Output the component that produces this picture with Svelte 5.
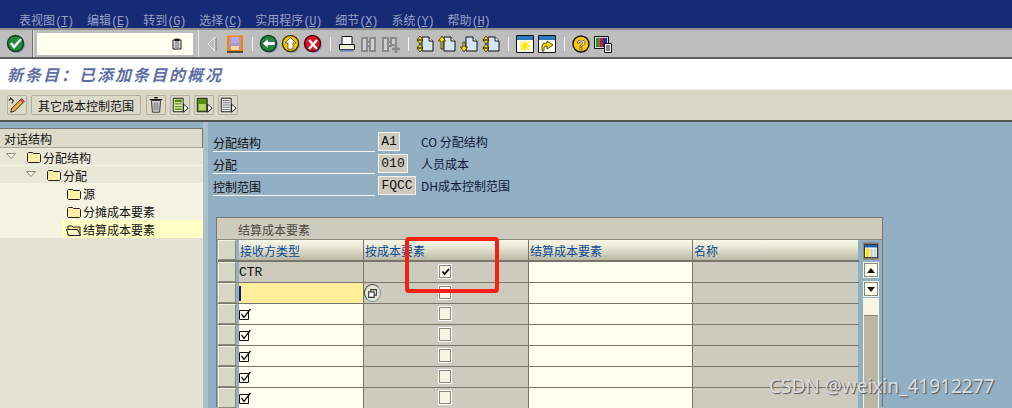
<script>
	const menus = [
		['表视图', 'T'], ['编辑', 'E'], ['转到', 'G'], ['选择', 'C'],
		['实用程序', 'U'], ['细节', 'X'], ['系统', 'Y'], ['帮助', 'H']
	];
	const fields = [
		{ label: '分配结构', value: 'A1', width: 22, text: 'CO 分配结构' },
		{ label: '分配', value: '010', width: 30, text: '人员成本' },
		{ label: '控制范围', value: 'FQCC', width: 38, text: 'DH成本控制范围' }
	];
	const tree = [
		{ text: '分配结构', level: 0, open: true },
		{ text: '分配', level: 1, open: true },
		{ text: '源', level: 2 },
		{ text: '分摊成本要素', level: 2 },
		{ text: '结算成本要素', level: 2, selected: true }
	];
	const rows = [
		{ kind: 'readonly', type: 'CTR', checked: true },
		{ kind: 'active' },
		{ kind: 'entry' },
		{ kind: 'entry' },
		{ kind: 'entry' },
		{ kind: 'entry' },
		{ kind: 'entry' },
		{ kind: 'entry' }
	];
</script>

{#snippet roundIcon(fill, dark)}
	<circle cx="11" cy="11" r="8" fill="#8a9ac8" />
	<circle cx="9.5" cy="9.5" r="8" fill={fill} stroke={dark} stroke-width="1.4" />
{/snippet}

{#snippet okIcon()}
	<svg viewBox="0 0 20 20">
		{@render roundIcon('#1f8a3c', '#10401f')}
		<path d="M5 9l3 4 7-8" fill="none" stroke="#fff" stroke-width="2.4" />
	</svg>
{/snippet}
{#snippet historyIcon()}
	<svg viewBox="0 0 12 12" class="small">
		<path d="M2 2h8v9H2z" fill="#fff" stroke="#111" />
		<path d="M4 1h4v2H4zM3.500 5h5M3.500 7h5M3.500 9h5" fill="#111" stroke="#111" stroke-width=".8" />
	</svg>
{/snippet}
{#snippet leftIcon()}
	<svg viewBox="0 0 20 20">
		<path d="M12 3v14L5 10z" fill="#bdbdbd" stroke="#f4f4f4" />
		<path d="M13 4v13" stroke="#777" />
	</svg>
{/snippet}
{#snippet saveIcon()}
	<svg viewBox="0 0 20 20">
		<path d="M3 2.500h14v14H3z" fill="#a898cc" stroke="#f08800" stroke-width="2" />
		<path d="M6 3h8v6H6z" fill="#b8a8d8" />
		<path d="M6 12h8v4H6z" fill="#fbd898" />
		<path d="M2 18h16" stroke="#222" stroke-width="1.400" />
	</svg>
{/snippet}
{#snippet backIcon()}
	<svg viewBox="0 0 20 20">
		{@render roundIcon('#1f8a3c', '#10401f')}
		<path d="M3.500 9.500L9 4.500v3h7v4H9v3z" fill="#fff" stroke="#123" stroke-width=".5" />
	</svg>
{/snippet}
{#snippet upIcon()}
	<svg viewBox="0 0 20 20">
		{@render roundIcon('#f5c800', '#4a3b00')}
		<path d="M9.500 3.500L15 9h-3v6H7V9H4z" fill="#fff" stroke="#222" stroke-width=".6" />
	</svg>
{/snippet}
{#snippet cancelIcon()}
	<svg viewBox="0 0 20 20">
		{@render roundIcon('#d81020', '#500010')}
		<path d="M6 6l8 9M14 6l-8 9" stroke="#fff" stroke-width="2.400" />
	</svg>
{/snippet}
{#snippet printIcon()}
	<svg viewBox="0 0 20 20">
		<path d="M5 2.500h10v8H5z" fill="#fff" stroke="#111" />
		<path d="M2.500 10.500h15v5h-15z" fill="#f0efd8" stroke="#111" />
		<path d="M3 16.500h14" stroke="#6b7db0" stroke-width="2" />
	</svg>
{/snippet}
{#snippet findIcon()}
	<svg viewBox="0 0 20 20">
		<path d="M3 4h5v13H3zM11 4h5v13h-5zM8 8h3v4H8z" fill="#cfcfcf" stroke="#8a8a8a" stroke-width="2" />
	</svg>
{/snippet}
{#snippet findNextIcon()}
	<svg viewBox="0 0 20 20">
		<path d="M2 4h5v13H2zM10 4h5v7h-5zM7 8h3v4H7z" fill="#cfcfcf" stroke="#8a8a8a" stroke-width="2" />
		<path d="M11 15h8M15 11v8" stroke="#8a8a8a" stroke-width="2.400" />
	</svg>
{/snippet}
{#snippet pageShape()}
	<path d="M7 3h7l4 4v10H7z" fill="#d6e6f7" stroke="#111" />
	<path d="M14 3v4h4" fill="#fff" stroke="#111" />
{/snippet}
{#snippet firstIcon()}
	<svg viewBox="0 0 20 20">
		{@render pageShape()}
		<path d="M5 2L2 6h6zM2 6l3 4 3-4z" fill="#ffe000" stroke="#111" stroke-width=".7" />
		<path d="M2 14h6l-3 4zM2 14l3-4 3 4z" fill="#ffe000" stroke="#111" stroke-width=".7" />
	</svg>
{/snippet}
{#snippet prevIcon()}
	<svg viewBox="0 0 20 20">
		{@render pageShape()}
		<path d="M5 2L1.500 7H4v8h2V7h2.500z" fill="#ffe000" stroke="#111" stroke-width=".7" />
	</svg>
{/snippet}
{#snippet nextIcon()}
	<svg viewBox="0 0 20 20">
		{@render pageShape()}
		<path d="M5 18L1.500 13H4V8h2v5h2.500z" fill="#ffe000" stroke="#111" stroke-width=".7" />
	</svg>
{/snippet}
{#snippet lastIcon()}
	<svg viewBox="0 0 20 20">
		{@render pageShape()}
		<path d="M5 2L2 6h6zM2 6l3 4 3-4z" fill="#ffe000" stroke="#111" stroke-width=".7" />
		<path d="M2 14h6l-3 4zM2 14l3-4 3 4z" fill="#ffe000" stroke="#111" stroke-width=".7" />
	</svg>
{/snippet}
{#snippet sessionIcon()}
	<svg viewBox="0 0 20 20">
		<path d="M1.500 1.500h17v17h-17z" fill="#fffff0" stroke="#111" />
		<path d="M2 2h16v4H2z" fill="#2f76c0" />
		<path d="M10 7v10M5 12h10M6 8l8 8M14 8l-8 8" stroke="#ffe800" stroke-width="1.600" />
	</svg>
{/snippet}
{#snippet shortcutIcon()}
	<svg viewBox="0 0 20 20">
		<path d="M1.500 1.500h17v17h-17z" fill="#fffff0" stroke="#111" />
		<path d="M2 2h16v4H2z" fill="#2f76c0" />
		<path d="M5 17v-5q0-3 4-3h1V7l6 4-6 4v-3H9q-2 0-2 2v3z" fill="#ffd800" stroke="#111" stroke-width=".7" />
	</svg>
{/snippet}
{#snippet helpIcon()}
	<svg viewBox="0 0 20 20">
		<circle cx="10" cy="10" r="8" fill="#ffc800" stroke="#111" stroke-width="1.400" />
		<text x="10" y="15.500" class="qmark">?</text>
	</svg>
{/snippet}
{#snippet layoutIcon()}
	<svg viewBox="0 0 20 20">
		<path d="M1.500 2.500h14v12h-14z" fill="#d8d8d8" stroke="#111" />
		<path d="M3 4h3.500v9H3z" fill="#10a030" />
		<path d="M6.500 4H10v9H6.500z" fill="#e01010" />
		<path d="M10 4h4v9h-4z" fill="#1030d0" />
		<path d="M11.500 9.500h7v9h-7z" fill="#fff" stroke="#111" />
		<path d="M13 12h4M13 14h4M13 16h4" stroke="#111" />
	</svg>
{/snippet}
{#snippet editIcon()}
	<svg viewBox="0 0 20 20">
		<path d="M1 5q2-3 4-1t-1 4M2 2l4 3" fill="none" stroke="#222" stroke-width="1.200" />
		<path d="M15 3l3 3L7 17l-4 1 1-4z" fill="#f3a93c" stroke="#222" />
		<path d="M14 4l3 3" stroke="#e04040" stroke-width="2" />
	</svg>
{/snippet}
{#snippet trashIcon()}
	<svg viewBox="0 0 20 20">
		<path d="M5 5h10l-1 13H6z" fill="#d8d8d8" stroke="#222" />
		<path d="M3 4h14M8 2h4" stroke="#222" stroke-width="1.600" />
		<path d="M8 7v9M10 7v9M12 7v9" stroke="#666" />
	</svg>
{/snippet}
{#snippet listGreenIcon()}
	<svg viewBox="0 0 20 20">
		<path d="M2.500 2.500h11v15h-11z" fill="#eef2c8" stroke="#111" />
		<path d="M4 4h8v3H4zM4 8h8v1.500H4zM4 11h8v1.500H4zM4 14h8v1.500H4z" fill="#5a8c10" />
		<path d="M14 9l5 4.500-5 4.500z" fill="#fff" stroke="#111" />
	</svg>
{/snippet}
{#snippet listDarkIcon()}
	<svg viewBox="0 0 20 20">
		<path d="M2.500 2.500h11v15h-11z" fill="#5a8c10" stroke="#111" />
		<path d="M4 9h8v7H4z" fill="#bcd070" />
		<path d="M14 9l5 4.500-5 4.500z" fill="#fff" stroke="#111" />
	</svg>
{/snippet}
{#snippet listWhiteIcon()}
	<svg viewBox="0 0 20 20">
		<path d="M2.500 2.500h11v15h-11z" fill="#f2f2f2" stroke="#111" />
		<path d="M4 5h8M4 7.500h8M4 10h8M4 12.500h8M4 15h8" stroke="#666" />
		<path d="M14 9l5 4.500-5 4.500z" fill="#fff" stroke="#111" />
	</svg>
{/snippet}
{#snippet tickIcon()}
	<svg viewBox="0 0 13 13" class="tick">
		<path d="M.5 2.500h9v9h-9z" fill="#fffff0" stroke="#111" />
		<path d="M2.500 6l2.500 3.500L11.500 1" fill="none" stroke="#111" stroke-width="1.300" />
	</svg>
{/snippet}
{#snippet folderIcon(open)}
	<svg viewBox="0 0 16 14" class="folder">
		{#if open}
			<path d="M2 3h4l1 1h7v8H2z" fill="#ffe79a" stroke="#222" />
			<path d="M.5 6.500h11l3 6H2.500z" fill="#fff6c8" stroke="#222" />
		{:else}
			<path d="M1.500 3.500l1-1h4l1 1h6l1 1v7l-1 1h-11l-1-1z" fill="#ffeea8" stroke="#222" />
		{/if}
	</svg>
{/snippet}

{#snippet tools(items)}
	{#each items as item}
		{#if item === null}
			<span class="sep"></span>
		{:else}
			<span class="tool">{@render item()}</span>
		{/if}
	{/each}
{/snippet}

<div class="window">
	<div class="menubar">
		{#each menus as [name, key]}
			<span class="menu">{name}<span class="paren">(<u>{key}</u>)</span></span>
		{/each}
	</div>

	<div class="systembar">
		<span class="tool first">{@render okIcon()}</span>
		<span class="groove"></span>
		<div class="command">{@render historyIcon()}</div>
		<span class="groove second"></span>
		{@render tools([leftIcon, saveIcon, null, backIcon, upIcon, cancelIcon, null, printIcon, findIcon, findNextIcon, null, firstIcon, prevIcon, nextIcon, lastIcon, null, sessionIcon, shortcutIcon, null, helpIcon, layoutIcon])}
	</div>

	<div class="titlebar">新条目：已添加条目的概况</div>

	<div class="appbar">
		<span class="btn icon">{@render editIcon()}</span>
		<span class="btn text">其它成本控制范围</span>
		<span class="btn icon">{@render trashIcon()}</span>
		<span class="btn icon">{@render listGreenIcon()}</span>
		<span class="btn icon">{@render listDarkIcon()}</span>
		<span class="btn icon">{@render listWhiteIcon()}</span>
	</div>

	<div class="content">
		<aside class="nav">
			<div class="navhead">对话结构</div>
			{#each tree as node}
				<div class="node level{node.level}" class:selected={node.selected}>
					{#if node.open}
						<svg viewBox="0 0 10 6" class="tri"><path d="M.5 .5h9L5 5.500z" fill="#f5f4e2" stroke="#8a8a7c" /></svg>
					{/if}
					{@render folderIcon(node.selected)}
					<span>{node.text}</span>
				</div>
			{/each}
			<div class="navrest"></div>
		</aside>

		<div class="splitter"></div>

		<main class="detail">
			<div class="form">
				{#each fields as f}
					<div class="field">
						<span class="label">{f.label}</span>
						<span class="value" style="width: {f.width}px">{f.value}</span>
						<span class="desc">{f.text}</span>
					</div>
				{/each}
			</div>

			<section class="panel">
				<div class="caption">结算成本要素</div>
				<div class="grid">
					<div class="table">
						<div class="row head">
							<span class="selector"></span>
							<span class="cell c1">接收方类型</span>
							<span class="cell c2">按成本要素</span>
							<span class="cell c3">结算成本要素</span>
							<span class="cell c4">名称</span>
						</div>
						{#each rows as row}
							<div class="row">
								<span class="selector"></span>
								<span class="cell c1 {row.kind}">
									{#if row.kind === 'readonly'}{row.type}{/if}
									{#if row.kind === 'active'}<span class="caret"></span>{/if}
									{#if row.kind === 'entry'}{@render tickIcon()}{/if}
								</span>
								<span class="cell c2 ro">
									{#if row.kind === 'active'}
										<span class="f4">
											<svg viewBox="0 0 10 10">
												<path d="M3.500 1.500h5v5h-5z" fill="#fff" stroke="#333" />
												<path d="M1.500 3.500h5v5h-5z" fill="#fff" stroke="#333" />
											</svg>
										</span>
									{/if}
									<span class="check">
										{#if row.checked}
											<svg viewBox="0 0 10 10"><path d="M1.500 5l2.500 3 5-6" fill="none" stroke="#111" stroke-width="2" /></svg>
										{/if}
									</span>
								</span>
								<span class="cell c3 edit"></span>
								<span class="cell c4 ro"></span>
							</div>
						{/each}
					</div>
					<div class="scroll">
						<span class="config">
							<svg viewBox="0 0 16 16">
								<path d="M.5 .5h15v15H.5z" fill="#fff" stroke="#111" />
								<path d="M1 1h14v3H1z" fill="#1f5fae" />
								<path d="M2 5h4v10H2z" fill="#ffe000" />
								<path d="M7 5h3v10H7zM11 5h3v10h-3z" fill="#c8d0d8" />
							</svg>
						</span>
						<span class="arrow"><i class="up"></i></span>
						<span class="arrow down-btn"><i class="down"></i></span>
						<span class="track"><span class="thumb"></span></span>
					</div>
				</div>
			</section>
		</main>
	</div>

	<div class="callout"></div>
	<div class="watermark">CSDN @weixin_41912277</div>
</div>

<style>
	:global(body) {
		background: #93afc3;
	}

	.window {
		position: relative;
		width: 1012px;
		height: 408px;
		overflow: hidden;
		display: flex;
		flex-direction: column;
		font-family: "Noto Sans CJK SC", "Liberation Sans", sans-serif;
		font-size: 12px;
		color: #111;
		background: #93afc3;
	}

	.menubar {
		height: 28px;
		box-sizing: border-box;
		flex: none;
		display: flex;
		gap: 14px;
		padding: 12px 0 0 19px;
		background: #172a75;
		color: #98a0c4;
		line-height: 16px;
	}

	.paren {
		font-family: "Liberation Mono", monospace;
		font-size: 12px;
		letter-spacing: -1.2px;
	}

	.systembar {
		height: 31px;
		box-sizing: border-box;
		flex: none;
		display: flex;
		align-items: center;
		background: #bdbdbd;
		border-top: 2px solid #8c8c8c;
		border-bottom: 2px solid #5c5c5c;
	}

	.tool {
		width: 22px;
		height: 22px;
		display: flex;
		align-items: center;
		justify-content: center;
	}

	.tool svg {
		width: 20px;
		height: 20px;
	}

	.tool.first {
		margin-left: 5px;
		margin-right: 5px;
	}

	.groove {
		width: 1px;
		align-self: stretch;
		background: #6f6f6f;
		border-right: 1px solid #e8e8e8;
	}

	.groove.second {
		margin: 0 3px 0 5px;
		background: #e8e8e8;
		border: 0;
	}

	.sep {
		width: 12px;
		display: flex;
		justify-content: center;
		height: 14px;
	}

	.sep::before {
		content: "";
		width: 1px;
		background: #f2f2f2;
	}

	.command {
		width: 156px;
		height: 22px;
		margin-left: 3px;
		box-sizing: border-box;
		padding-right: 10px;
		display: flex;
		align-items: center;
		justify-content: flex-end;
		background: #fffff0;
	}

	.small {
		width: 12px;
		height: 12px;
	}

	.titlebar {
		height: 30px;
		box-sizing: border-box;
		flex: none;
		padding: 2px 0 0 7px;
		background: #fff;
		color: #5e6ea6;
		font-size: 16px;
		font-weight: 700;
		font-style: italic;
		letter-spacing: 2px;
		line-height: 26px;
		white-space: nowrap;
	}

	.appbar {
		height: 33px;
		box-sizing: border-box;
		flex: none;
		display: flex;
		align-items: center;
		gap: 4px;
		padding-left: 7px;
		background: #d8d7c5;
		border-top: 1px solid #f4f3e6;
		border-bottom: 2px solid #55554d;
	}

	.btn {
		height: 20px;
		box-sizing: border-box;
		display: flex;
		align-items: center;
		justify-content: center;
		border: 1px solid #b0af9e;
		border-radius: 2px;
		background: #dcdbca;
	}

	.btn.icon {
		width: 20px;
	}

	.btn.icon svg {
		width: 18px;
		height: 18px;
	}

	.btn.text {
		width: 110px;
		font-size: 12px;
	}

	.btn.text + .btn.icon {
		margin-left: 1px;
	}

	.content {
		flex: 1;
		min-height: 0;
		display: flex;
	}

	.nav {
		width: 203px;
		margin-top: 6px;
		flex: none;
		display: flex;
		flex-direction: column;
		background: #f5f4e2;
		border-top: 1px solid #77766a;
	}

	.navhead {
		height: 19px;
		box-sizing: border-box;
		padding-left: 4px;
		background: #dcdbca;
		border-right: 1px solid #77766a;
		border-bottom: 1px solid #a8a798;
		line-height: 19px;
	}

	.node {
		position: relative;
		height: 18px;
		box-sizing: border-box;
		padding-top: 1px;
		display: flex;
		align-items: center;
		line-height: 17px;
		white-space: nowrap;
	}

	.node.level0,
	.node.level1 {
		background: #e9e8d6;
		border-bottom: 1px solid #f5f4e2;
	}

	.level0 {
		padding-left: 26px;
	}

	.level1 {
		padding-left: 46px;
	}

	.level2 {
		padding-left: 66px;
	}

	.node.selected {
		margin-left: 62px;
		padding-left: 4px;
		background: #ffffc4;
	}

	.tri {
		position: absolute;
		margin-left: -20px;
		margin-top: -3px;
		width: 10px;
		height: 6px;
	}

	.folder {
		width: 16px;
		height: 14px;
		margin-right: 1px;
		flex: none;
	}

	.navrest {
		flex: 1;
		background: #e4e3d1;
	}

	.splitter {
		width: 5px;
		flex: none;
		background: #aebfca;
	}

	.detail {
		flex: 1;
		min-width: 0;
	}

	.form {
		padding: 10px 0 0 5px;
	}

	.field {
		display: flex;
		height: 22px;
		align-items: flex-start;
	}

	.label {
		width: 162px;
		margin-right: 3px;
		height: 18px;
		padding-top: 1px;
		line-height: 19px;
		border-bottom: 1px solid #f4f6f4;
	}

	.value {
		height: 19px;
		box-sizing: border-box;
		text-align: center;
		font-family: "Liberation Mono", monospace;
		font-size: 13px;
		line-height: 17px;
		background: #cdcbbd;
		border: 1px solid #f2f3ea;
	}

	.desc {
		margin-left: 5px;
		line-height: 20px;
		color: #10183a;
	}

	.field:nth-child(1) .desc {
		margin-left: 21px;
	}

	.field:nth-child(2) .desc {
		margin-left: 13px;
	}

	.panel {
		margin: 19px 0 0 8px;
		width: 667px;
		height: 190px;
		box-sizing: border-box;
		border: 1px solid #77766a;
		border-bottom: 0;
		background: #93afc3;
	}

	.caption {
		height: 22px;
		box-sizing: border-box;
		padding: 3px 0 0 21px;
		line-height: 17px;
		color: #4a4a40;
		background: #cdcbbd;
		border-bottom: 1px solid #8a897c;
	}

	.grid {
		display: flex;
	}

	.table {
		width: 641px;
		margin-left: 1px;
		flex: none;
	}

	.row {
		display: flex;
		height: 21px;
		box-sizing: border-box;
		border-bottom: 1px solid #77766a;
	}

	.row.head {
		height: 22px;
		border-bottom: 2px solid #77766a;
	}

	.selector {
		width: 18px;
		flex: none;
		box-sizing: border-box;
		margin-right: 3px;
		background: #d8d7c5;
		border: 1px solid #f2f1e4;
		border-right-color: #8a897c;
		border-bottom-color: #8a897c;
	}

	.cell {
		position: relative;
		box-sizing: border-box;
		display: flex;
		align-items: center;
		border-right: 1px solid #77766a;
		overflow: hidden;
	}

	.c1 {
		width: 125px;
	}

	.c2 {
		width: 165px;
	}

	.c3 {
		width: 164px;
	}

	.c4 {
		width: 165px;
		border-right: 0;
	}

	.head .cell {
		padding-left: 1px;
		color: #0b4a92;
		background: linear-gradient(#f8f7e8, #e6e5d2 40%, #bab9a7);
	}

	.readonly,
	.ro {
		background: #cdcbbd;
	}

	.readonly {
		font-family: "Liberation Mono", monospace;
		font-size: 13px;
	}

	.active {
		background: #ffee9a;
	}

	.entry,
	.edit {
		background: #fffff0;
	}

	.caret {
		width: 2px;
		height: 15px;
		background: #0a1a70;
	}

	.tick {
		width: 13px;
		height: 13px;
	}

	.check {
		position: absolute;
		left: 74px;
		top: 2px;
		width: 14px;
		height: 15px;
		box-sizing: border-box;
		background: #f6f5e3;
		border: 1px solid #fff;
		outline: 1px solid #8a897c;
		outline-offset: -2px;
		display: flex;
		align-items: center;
		justify-content: center;
	}

	.check svg {
		width: 9px;
		height: 9px;
	}

	.f4 {
		position: absolute;
		left: 0;
		top: 1px;
		width: 17px;
		height: 18px;
		box-sizing: border-box;
		border-radius: 50%;
		display: flex;
		align-items: center;
		justify-content: center;
		background: #e6e5d2;
		border: 1px solid #444;
		border-right-color: #6f93b2;
		border-bottom-color: #6f93b2;
	}

	.f4 svg {
		width: 11px;
		height: 11px;
	}

	.scroll {
		width: 16px;
		margin-left: 4px;
		flex: none;
		display: flex;
		flex-direction: column;
		padding-top: 2px;
	}

	.config {
		height: 18px;
		display: block;
		box-sizing: border-box;
		padding: 1px;
		background: #8a897c;
	}

	.config svg {
		display: block;
		width: 14px;
		height: 16px;
	}

	.arrow {
		height: 16px;
		margin-top: 2px;
		box-sizing: border-box;
		display: flex;
		align-items: center;
		justify-content: center;
		background: #fffff0;
		border: 1px solid #f2f3ea;
		outline: 1px solid #8a897c;
		outline-offset: -2px;
	}

	.down-btn {
		margin-top: 3px;
	}

	.arrow i {
		width: 0;
		height: 0;
		border: 4px solid transparent;
	}

	.arrow .up {
		border-top: 0;
		border-bottom: 5px solid #111;
	}

	.arrow .down {
		border-bottom: 0;
		border-top: 5px solid #111;
	}

	.track {
		flex: 1;
		margin-top: 1px;
		background: #b8b7a6;
		border: 1px solid #f2f3ea;
	}

	.thumb {
		display: block;
		height: 16px;
		background: #f6f5e3;
		border-bottom: 1px solid #8a897c;
	}

	.callout {
		position: absolute;
		left: 405px;
		top: 237px;
		width: 94px;
		height: 56px;
		box-sizing: border-box;
		border: 4px solid #f5200f;
		border-radius: 4px;
	}

	.watermark {
		position: absolute;
		left: 769px;
		top: 374px;
		font-family: "Noto Sans", sans-serif;
		font-size: 19px;
		line-height: 24px;
		color: #d8dee2;
		text-shadow: 1px 1px 1px #555;
		white-space: nowrap;
	}

	.qmark {
		font-family: "Liberation Sans", sans-serif;
		font-size: 15px;
		font-weight: 700;
		text-anchor: middle;
		fill: #fff;
		stroke: #111;
		stroke-width: .5;
	}
</style>
